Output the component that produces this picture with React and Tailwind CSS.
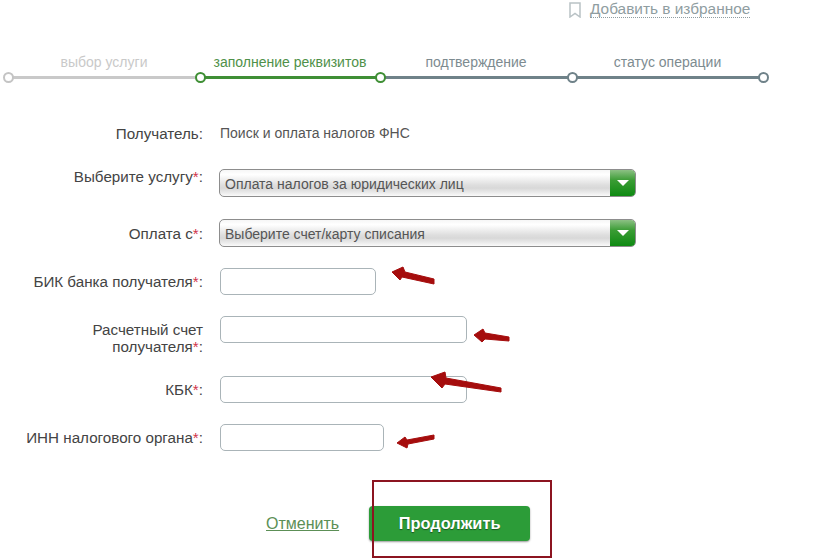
const steps = [
  { label: "выбор услуги", width: "w-[192px]", text: "text-[#c9c9c9]", line: "bg-[#c9c9c9]", dot: "border-[#c4c4c4]" },
  { label: "заполнение реквизитов", width: "w-[180px]", text: "text-[#4f9149]", line: "bg-[#3f8f35]", dot: "border-[#3f8f35]" },
  { label: "подтверждение", width: "w-[192px]", text: "text-[#7d8b90]", line: "bg-[#6f8289]", dot: "border-[#3f8f35]" },
  { label: "статус операции", width: "w-[191px]", text: "text-[#7d8b90]", line: "bg-[#6f8289]", dot: "border-[#6f8289]" },
];

const Dot = ({ color, className }) => (
  <span className={`absolute top-[-4px] w-[11px] h-[11px] rounded-full border-2 bg-white ${color} ${className}`} />
);

const Stepper = () => (
  <div className="flex ml-[8px] mt-[35px]">
    {steps.map((step, i) => (
      <div key={step.label} className={step.width}>
        <p className={`text-center text-[14px] leading-[17px] ${step.text}`}>{step.label}</p>
        <div className={`relative h-[3px] mt-[5px] ${step.line}`}>
          <Dot color={step.dot} className="left-[-5px]" />
          {i === steps.length - 1 && <Dot color={step.dot} className="right-[-6px]" />}
        </div>
      </div>
    ))}
  </div>
);

const Label = ({ children, required = true, className = "" }) => (
  <div className={`w-[203px] shrink-0 text-right text-[15.2px] leading-[17px] text-[#444] ${className}`}>
    {children}
    {required && <span className="text-[#d0344a]">*</span>}:
  </div>
);

const Select = ({ value }) => (
  <div className="ml-[16px] flex w-[417px] h-[28px] rounded-[5px] border border-[#8d8d8d] overflow-hidden bg-[linear-gradient(180deg,#f6f6f6_0%,#ffffff_18%,#dedede_58%,#d8d8d8_70%,#fafafa_100%)]">
    <span className="flex-1 pl-[5px] text-[14px] leading-[28px] text-[#555]">{value}</span>
    <span className="flex w-[25px] items-center justify-center bg-[linear-gradient(180deg,#8cc084_0%,#3a9c34_40%,#0e8a12_100%)]">
      <span className="w-0 h-0 border-x-[6px] border-t-[6px] border-x-transparent border-t-white" />
    </span>
  </div>
);

const Input = ({ width }) => (
  <div className={`ml-[17px] h-[27px] rounded-[5px] border border-[#aab4b8] bg-white ${width}`} />
);

// красные пометки поверх формы
const arrows = [
  "392,272 403,267 405,272 434,279 434,284 402,277 400,280",
  "474,335 483,329 485,333 509,337 509,341 485,339 482,342",
  "431,377 445,372 446,378 501,388 501,392 445,384 442,388",
  "397,443 405,437 407,440 434,435 434,439 408,444 407,448",
];

export default function App() {
  return (
    <div className="relative w-[816px] h-[560px] overflow-hidden bg-white font-['Liberation_Sans',Arial,sans-serif]">
      <div className="flex items-center h-[19px] pl-[569px]">
        <svg width="12" height="16" viewBox="0 0 12 16" fill="none" stroke="#b9c2c5" strokeWidth="1.5">
          <path d="M1 1h10v14l-5-3.5L1 15z" />
        </svg>
        <a className="ml-[9px] text-[15.4px] leading-[16px] text-[#8f9da1] border-b border-dotted border-[#8f9da1]">
          Добавить в избранное
        </a>
      </div>

      <Stepper />

      <div className="flex items-start mt-[46px] h-[17px]">
        <Label required={false}>Получатель</Label>
        <span className="ml-[17px] text-[14px] leading-[17px] text-[#555]">Поиск и оплата налогов ФНС</span>
      </div>

      <div className="flex items-start mt-[27px]">
        <Label className="-mt-[1px]">Выберите услугу</Label>
        <Select value="Оплата налогов за юридических лиц" />
      </div>

      <div className="flex items-center mt-[22px]">
        <Label>Оплата с</Label>
        <Select value="Выберите счет/карту списания" />
      </div>

      <div className="flex items-center mt-[21px]">
        <Label>БИК банка получателя</Label>
        <Input width="w-[156px]" />
      </div>

      <div className="flex items-start mt-[21px] h-[39px]">
        <Label className="pt-[5px]">
          Расчетный счет
          <br />
          получателя
        </Label>
        <Input width="w-[247px]" />
      </div>

      <div className="flex items-center mt-[21px]">
        <Label>КБК</Label>
        <Input width="w-[247px]" />
      </div>

      <div className="flex items-center mt-[21px]">
        <Label>ИНН налогового органа</Label>
        <Input width="w-[164px]" />
      </div>

      <div className="flex items-center mt-[55px] pl-[266px]">
        <a className="text-[16px] leading-[18px] text-[#5c8f56] underline">Отменить</a>
        <button className="ml-[30px] w-[161px] h-[35px] rounded-[4px] bg-[#2c9c38] text-[16.4px] font-bold text-white [text-shadow:0_1px_1px_rgba(0,0,0,0.45)] shadow-[0_1px_2px_rgba(0,0,0,0.4)]">
          Продолжить
        </button>
      </div>

      <svg className="absolute inset-0 pointer-events-none" width="816" height="560" viewBox="0 0 816 560">
        {arrows.map((points) => (
          <polygon key={points} points={points} fill="#a50d0d" stroke="#a50d0d" strokeWidth="1" strokeLinejoin="round" />
        ))}
      </svg>
      <div className="absolute left-[372px] top-[480px] w-[180px] h-[78px] border-2 border-[#8c1420] pointer-events-none" />
    </div>
  );
}
